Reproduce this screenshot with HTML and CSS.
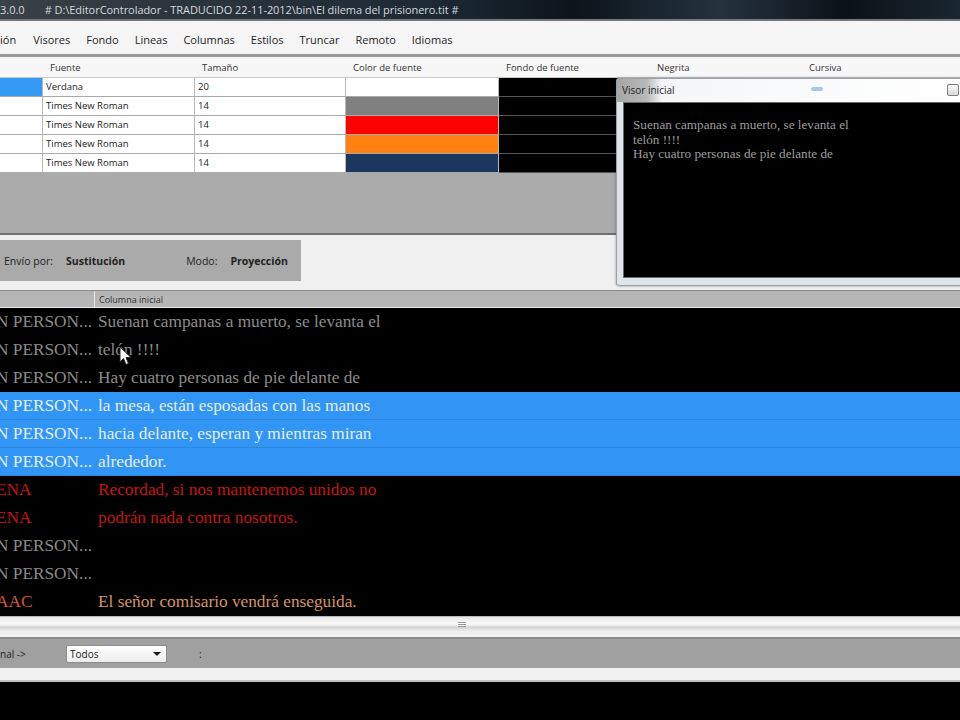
FILE: index.html
```html
<!DOCTYPE html>
<html lang="es">
<head>
<meta charset="utf-8">
<title>EditorControlador</title>
<link rel="stylesheet" href="styles.css">
</head>
<body>
<div class="app">
  <header class="titlebar">
    <span class="ver">3.0.0</span>
    <span class="path"># D:\EditorControlador - TRADUCIDO 22-11-2012\bin\El dilema del prisionero.tit #</span>
  </header>

  <nav class="menu">
    <span class="cut">ión</span>
    <span>Visores</span>
    <span>Fondo</span>
    <span>Lineas</span>
    <span>Columnas</span>
    <span>Estilos</span>
    <span>Truncar</span>
    <span>Remoto</span>
    <span>Idiomas</span>
  </nav>

  <section class="styles">
    <div class="grid">
      <div class="hd"></div><div class="hd">Fuente</div><div class="hd">Tamaño</div><div class="hd">Color de fuente</div><div class="hd">Fondo de fuente</div><div class="hd center">Negrita</div><div class="hd center">Cursiva</div>

      <div class="cell sel"></div><div class="cell">Verdana</div><div class="cell">20</div><div class="cell sw-white"></div><div class="cell sw-black"></div><div class="cell"></div><div class="cell"></div>
      <div class="cell"></div><div class="cell">Times New Roman</div><div class="cell">14</div><div class="cell sw-gray"></div><div class="cell sw-black"></div><div class="cell"></div><div class="cell"></div>
      <div class="cell"></div><div class="cell">Times New Roman</div><div class="cell">14</div><div class="cell sw-red"></div><div class="cell sw-black"></div><div class="cell"></div><div class="cell"></div>
      <div class="cell"></div><div class="cell">Times New Roman</div><div class="cell">14</div><div class="cell sw-orange"></div><div class="cell sw-black"></div><div class="cell"></div><div class="cell"></div>
      <div class="cell"></div><div class="cell">Times New Roman</div><div class="cell">14</div><div class="cell sw-navy"></div><div class="cell sw-black"></div><div class="cell"></div><div class="cell"></div>
    </div>
    <div class="grid-fill"></div>
  </section>

  <section class="status">
    <div class="status-box">
      <span class="lbl">Envío por:</span><b class="val">Sustitución</b>
      <span class="lbl mode">Modo:</span><b class="val">Proyección</b>
    </div>
  </section>

  <section class="lines">
    <div class="lines-head">
      <div class="lh first"></div>
      <div class="lh">Columna inicial</div>
    </div>
    <div class="row gray"><span class="who">N PERSON...</span><span class="txt">Suenan campanas a muerto, se levanta el</span></div>
    <div class="row gray"><span class="who">N PERSON...</span><span class="txt">telón !!!!</span></div>
    <div class="row gray"><span class="who">N PERSON...</span><span class="txt">Hay cuatro personas de pie delante de</span></div>
    <div class="row picked"><span class="who">N PERSON...</span><span class="txt">la mesa, están esposadas con las manos</span></div>
    <div class="row picked"><span class="who">N PERSON...</span><span class="txt">hacia delante, esperan y mientras miran</span></div>
    <div class="row picked"><span class="who">N PERSON...</span><span class="txt">alrededor.</span></div>
    <div class="row red"><span class="who">ENA</span><span class="txt">Recordad, si nos mantenemos unidos no</span></div>
    <div class="row red"><span class="who">ENA</span><span class="txt">podrán nada contra nosotros.</span></div>
    <div class="row gray"><span class="who">N PERSON...</span><span class="txt"></span></div>
    <div class="row gray"><span class="who">N PERSON...</span><span class="txt"></span></div>
    <div class="row amber"><span class="who">AAC</span><span class="txt">El señor comisario vendrá enseguida.</span></div>
  </section>

  <div class="splitter"><span class="grip"></span></div>

  <section class="filter">
    <div class="filter-bar">
      <span class="flabel">nal -&gt;</span>
      <div class="combo"><span>Todos</span><span class="arrow"></span></div>
      <span class="colon">:</span>
    </div>
  </section>

  <div class="tail"></div>

  <!-- floating preview window -->
  <div class="visor">
    <div class="visor-title">
      <span class="visor-name">Visor inicial</span>
      <span class="visor-tick"></span>
      <span class="visor-btn"></span>
    </div>
    <div class="visor-screen">
      <p>Suenan campanas a muerto, se levanta el<br>telón !!!!<br>Hay cuatro personas de pie delante de</p>
    </div>
  </div>

  <!-- mouse pointer -->
  <svg class="pointer" width="14" height="20" viewBox="0 0 14 20">
    <path d="M1 1 L1 16 L4.5 12.5 L7 18.5 L9.5 17.5 L7 11.5 L12 11.5 Z" fill="#fff" stroke="#222" stroke-width="1"/>
  </svg>
</div>
</body>
</html>
```

FILE: styles.css
```css
* { box-sizing: border-box; }

html, body {
  margin: 0;
  padding: 0;
  background: #000;
}

.app {
  position: relative;
  width: 960px;
  height: 720px;
  overflow: hidden;
  font-family: "Open Sans", "DejaVu Sans", sans-serif;
  background: #000;
}

/* ---- window title ---- */
.titlebar {
  height: 21px;
  display: flex;
  align-items: center;
  gap: 20px;
  padding-left: 0;
  font-size: 11px;
  color: #d4d9de;
  background: linear-gradient(90deg, #3a4148 0%, #2a343d 20%, #1d2a35 45%, #0c141c 60%, #25333f 75%, #0b1118 88%, #1a2630 100%);
  border-bottom: 2px solid #767676;
}
.path { letter-spacing: -0.05px; }

/* ---- menu ---- */
.menu {
  height: 36px;
  display: flex;
  align-items: center;
  padding-top: 3px;
  background: #f5f5f5;
  font-size: 11px;
  color: #1e1e1e;
  border-bottom: 3px solid #9a9a9a;
}
.menu span { margin-right: 16px; }
.menu .cut { margin-right: 17px; }

/* ---- style grid ---- */
.styles {
  background: #ababab;
  border-bottom: 2px solid #707070;
}
.grid {
  display: grid;
  grid-template-columns: 43px 152px 151px 153px 152px 152px 1fr;
  grid-auto-rows: 19px;
  grid-template-rows: 21px;
  font-size: 9.5px;
  color: #222;
}
.hd {
  background: #f7f7f7;
  border-bottom: 1px solid #c8c8c8;
  padding: 4px 0 0 7px;
  color: #333;
}
.hd.center { padding-left: 6px; }
.cell {
  background: #fff;
  border-right: 1px solid #b8b8b8;
  border-bottom: 1px solid #a9a9a9;
  padding: 2px 0 0 3px;
}
.cell.sel { background: #3399f3; }
.sw-white { background: #fff; }
.sw-gray { background: #808080; }
.sw-red { background: #fe0000; }
.sw-orange { background: #ff8112; }
.sw-navy { background: #1b365f; }
.sw-black { background: #000; border-bottom-color: #555; }
.grid-fill { height: 60px; }

/* ---- status strip ---- */
.status {
  height: 55px;
  background: #f0f0f0;
  padding-top: 5px;
}
.status-box {
  width: 301px;
  height: 41px;
  background: #aaa;
  display: flex;
  align-items: center;
  font-size: 10.5px;
  color: #222;
}
.lbl { margin-left: 4px; margin-right: 13px; }
.lbl.mode { margin-left: 61px; }
.val { font-weight: 700; }

/* ---- lines list ---- */
.lines {
  background: #000;
  border-top: 1px solid #8a8a8a;
}
.lines-head {
  display: grid;
  grid-template-columns: 95px 1fr;
  height: 17px;
  background: #b6b6b6;
  border-bottom: 1px solid #e8e8e8;
  font-size: 9px;
  color: #333;
}
.lh { padding: 2px 0 0 4px; }
.lh.first { border-right: 1px solid #e6e6e6; }
.row {
  display: grid;
  grid-template-columns: 98px 1fr;
  height: 28px;
  align-items: center;
  font-family: "Liberation Serif", "Times New Roman", serif;
  font-size: 17.3px;
  white-space: nowrap;
  overflow: hidden;
}
.who { margin-left: -4px; }
.row.gray { color: #8b8b8b; }
.row.picked {
  background: #3195f6;
  color: #e4efff;
  border-bottom: 1px solid #2b86de;
}
.row.red { color: #c51515; }
.row.amber .who { color: #d9542a; }
.row.amber .txt { color: #d79463; }

/* ---- splitter ---- */
.splitter {
  height: 16px;
  background: linear-gradient(#e6e6e6, #fafafa 45%, #d4d4d4 70%, #f2f2f2);
  border-top: 1px solid #bdbdbd;
  display: flex;
  align-items: center;
  padding-left: 458px;
}
.grip {
  width: 8px;
  height: 5px;
  border-top: 1px solid #9a9a9a;
  border-bottom: 1px solid #9a9a9a;
  background: linear-gradient(#fff 40%, #9a9a9a 40%, #9a9a9a 60%, #fff 60%);
}

/* ---- filter bar ---- */
.filter {
  background: #f0f0f0;
  padding: 5px 0 0;
  height: 50px;
  border-bottom: 2px solid #c2c2c2;
}
.filter-bar {
  height: 31px;
  background: #a0a0a0;
  border-top: 2px solid #8a8a8a;
  display: flex;
  align-items: center;
  font-size: 10px;
  color: #222;
}
.flabel { width: 66px; }
.combo {
  width: 101px;
  height: 18px;
  display: flex;
  align-items: center;
  justify-content: space-between;
  padding: 0 5px 0 3px;
  background: linear-gradient(#ffffff, #ededed);
  border: 1px solid #8c8c8c;
  border-radius: 2px;
}
.arrow {
  width: 0;
  height: 0;
  border-left: 4px solid transparent;
  border-right: 4px solid transparent;
  border-top: 4px solid #111;
}
.colon { margin-left: 32px; }

.tail { height: 38px; background: #000; }

/* ---- floating preview window ---- */
.visor {
  position: absolute;
  left: 616px;
  top: 78px;
  width: 350px;
  height: 208px;
  background: #dfe4e8;
  border: 1px solid #9aa0a6;
  border-radius: 3px;
  padding: 0 0 7px 6px;
  display: flex;
  flex-direction: column;
  box-shadow: 0 0 3px rgba(0,0,0,0.35);
}
.visor-title {
  height: 23px;
  margin-left: -6px;
  display: flex;
  align-items: center;
  position: relative;
  background: linear-gradient(90deg, #a6a6a6 0px, #b8b8b8 30px, #f4f6f8 45px, #ffffff 100%);
  font-family: "Open Sans", "DejaVu Sans", sans-serif;
  font-size: 10px;
  color: #222;
  padding: 0 0 2px 5px;
}
.visor-tick {
  position: absolute;
  left: 194px;
  top: 8px;
  width: 12px;
  height: 4px;
  border-radius: 2px;
  background: #a8c8ea;
}
.visor-btn {
  position: absolute;
  left: 330px;
  top: 5px;
  width: 12px;
  height: 12px;
  border: 1px solid #7c7c7c;
  border-radius: 2px;
  background: linear-gradient(#fafafa, #d8d8d8);
}
.visor-screen {
  flex: 1;
  background: #000;
  border: 1px solid #6a6a6a;
}
.visor-screen p {
  margin: 15px 0 0 9px;
  font-family: "Liberation Serif", "Times New Roman", serif;
  font-size: 13.2px;
  line-height: 14.5px;
  color: #9d9d9d;
}

.pointer {
  position: absolute;
  left: 119px;
  top: 346px;
}
```
